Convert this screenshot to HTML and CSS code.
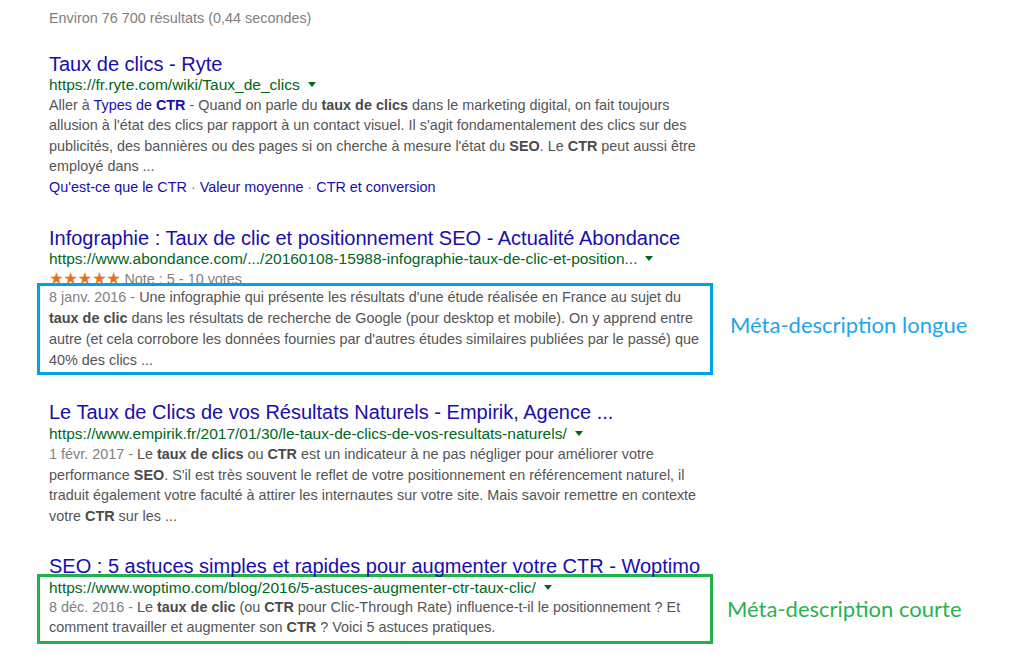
FILE: index.html
```html
<!DOCTYPE html>
<html lang="fr">
<head>
<meta charset="utf-8">
<link rel="stylesheet" href="styles.css">
</head>
<body>
<div class="page">
  <div class="stats">Environ 76 700 résultats (0,44 secondes)</div>

  <div class="result r1">
    <div class="title">Taux de clics - Ryte</div>
    <div class="url">https://fr.ryte.com/wiki/Taux_de_clics<span class="caret"></span></div>
    <div class="snippet">Aller à <span class="lnk">Types de <b>CTR</b></span> - Quand on parle du <b>taux de clics</b> dans le marketing digital, on fait toujours<br>allusion à l'état des clics par rapport à un contact visuel. Il s'agit fondamentalement des clics sur des<br>publicités, des bannières ou des pages si on cherche à mesure l'état du <b>SEO</b>. Le <b>CTR</b> peut aussi être<br>employé dans ...</div>
    <div class="sitelinks"><span class="lnk">Qu'est-ce que le CTR</span> · <span class="lnk">Valeur moyenne</span> · <span class="lnk">CTR et conversion</span></div>
  </div>

  <div class="result r2">
    <div class="title">Infographie : Taux de clic et positionnement SEO - Actualité Abondance</div>
    <div class="url">https://www.abondance.com/.../20160108-15988-infographie-taux-de-clic-et-position...<span class="caret"></span></div>
    <div class="rating"><span class="stars">★★★★★</span> Note : 5 - 10 votes</div>
    <div class="annot">
      <div class="box blue">
        <div class="snippet"><span class="date">8 janv. 2016 - </span>Une infographie qui présente les résultats d'une étude réalisée en France au sujet du<br><b>taux de clic</b> dans les résultats de recherche de Google (pour desktop et mobile). On y apprend entre<br>autre (et cela corrobore les données fournies par d'autres études similaires publiées par le passé) que<br>40% des clics ...</div>
      </div>
      <div class="label blue-t">Méta-description longue</div>
    </div>
  </div>

  <div class="result r3">
    <div class="title">Le Taux de Clics de vos Résultats Naturels - Empirik, Agence ...</div>
    <div class="url">https://www.empirik.fr/2017/01/30/le-taux-de-clics-de-vos-resultats-naturels/<span class="caret"></span></div>
    <div class="snippet"><span class="date">1 févr. 2017 - </span>Le <b>taux de clics</b> ou <b>CTR</b> est un indicateur à ne pas négliger pour améliorer votre<br>performance <b>SEO</b>. S'il est très souvent le reflet de votre positionnement en référencement naturel, il<br>traduit également votre faculté à attirer les internautes sur votre site. Mais savoir remettre en contexte<br>votre <b>CTR</b> sur les ...</div>
  </div>

  <div class="result r4">
    <div class="title">SEO : 5 astuces simples et rapides pour augmenter votre CTR - Woptimo</div>
    <div class="annot">
      <div class="box green">
        <div class="url">https://www.woptimo.com/blog/2016/5-astuces-augmenter-ctr-taux-clic/<span class="caret"></span></div>
        <div class="snippet"><span class="date">8 déc. 2016 - </span>Le <b>taux de clic</b> (ou <b>CTR</b> pour Clic-Through Rate) influence-t-il le positionnement ? Et<br>comment travailler et augmenter son <b>CTR</b> ? Voici 5 astuces pratiques.</div>
      </div>
      <div class="label green-t">Méta-description courte</div>
    </div>
  </div>
</div>
</body>
</html>
```

FILE: styles.css
```css
* { box-sizing: border-box; }
html, body { margin: 0; padding: 0; background: #fff; }
body {
  font-family: "Liberation Sans", Arial, sans-serif;
  width: 1024px;
  height: 660px;
  overflow: hidden;
}
.page {
  padding: 8px 0 0 49px;
}
.stats {
  font-size: 14.4px;
  line-height: 20px;
  color: #808080;
  margin-bottom: 25px;
}
.title {
  font-size: 20px;
  line-height: 22px;
  color: #1a0dab;
  white-space: nowrap;
}
.url {
  font-size: 15.5px;
  line-height: 19px;
  color: #006621;
  white-space: nowrap;
}
.caret {
  display: inline-block;
  width: 0;
  height: 0;
  margin-left: 8px;
  vertical-align: 3px;
  border-left: 4px solid transparent;
  border-right: 4px solid transparent;
  border-top: 5px solid #006621;
}
.snippet {
  font-size: 14.4px;
  line-height: 20.3px;
  color: #545454;
  white-space: nowrap;
}
.snippet b { color: #4a4a4a; font-weight: bold; }
.date { color: #808080; }
.lnk { color: #1a0dab; }
.lnk b { color: #1a0dab; }
.sitelinks {
  font-size: 14.4px;
  line-height: 22px;
  color: #808080;
}

.r1 .snippet { margin-top: 1px; }
.r1 { margin-bottom: 29px; }
.r2 { margin-bottom: 26px; }
.r3 { margin-bottom: 29px; }
.r3 .url { margin-top: 1px; }
.r3 .snippet { line-height: 20.5px; margin-top: 1px; }

.rating {
  font-size: 14.4px;
  line-height: 22px;
  height: 15px;
  color: #808080;
}
.stars {
  font-family: "DejaVu Sans", sans-serif;
  font-size: 16.5px;
  color: #e7711b;
  letter-spacing: -0.5px;
}
.annot {
  display: flex;
  align-items: center;
  gap: 17px;
  margin-left: -12px;
}
.box {
  width: 676px;
  border: 3px solid;
  padding: 1px 9px;
}
.blue { border-color: #00a2e8; }
.blue .snippet { line-height: 21px; }
.green { border-color: #22b14c; padding: 1px 9px 3px; }
.r4 .title { margin-bottom: -3px; position: relative; }
.label {
  font-family: Lato, "Open Sans", sans-serif;
  font-size: 22px;
  white-space: nowrap;
}
.blue-t { color: #1ea6ea; margin-bottom: 10px; }
.green-t { color: #2bb050; margin-right: 3px; }
.r4 .annot { gap: 14px; }
```
